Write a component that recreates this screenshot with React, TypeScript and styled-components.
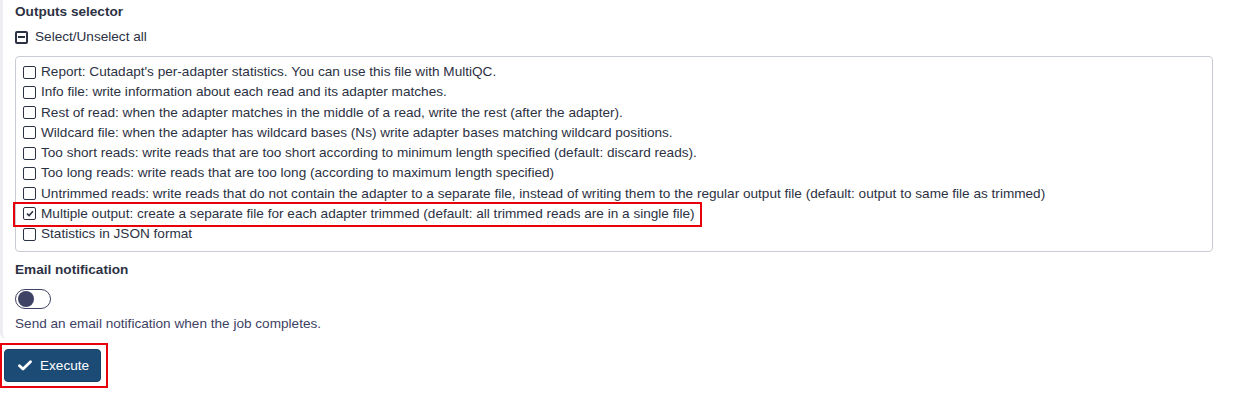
import React from "react";
import styled, { createGlobalStyle } from "styled-components";

const Global = createGlobalStyle`
  html, body { margin: 0; padding: 0; background: #ffffff; }
  body {
    font-family: "Liberation Sans", Arial, sans-serif;
    font-size: 13.6px;
    color: #2c3143;
  }
`;

const Page = styled.div`
  width: 1233px;
  height: 400px;
  overflow: hidden;
  display: flex;
  flex-direction: column;
  align-items: flex-start;
`;

const Panel = styled.div`
  align-self: stretch;
  box-sizing: border-box;
  height: 339px;
  border-left: 3px solid #eceef1;
  border-bottom-left-radius: 6px;
  padding: 2px 20px 0 12px;
  display: flex;
  flex-direction: column;
`;

const Heading = styled.div`
  font-weight: bold;
  line-height: 20px;
  height: 20px;
`;

const SelectAll = styled.div`
  display: flex;
  align-items: center;
  gap: 7px;
  margin-top: 5px;
  height: 20px;
  line-height: 20px;
`;

const MinusBox = styled.span`
  box-sizing: border-box;
  width: 13px;
  height: 13px;
  border: 2px solid #2c3143;
  border-radius: 2px;
  display: flex;
  align-items: center;
  justify-content: center;
  &::before {
    content: "";
    width: 7px;
    height: 2px;
    background: #2c3143;
  }
`;

const OptionBox = styled.div`
  margin-top: 9px;
  box-sizing: border-box;
  height: 196px;
  border: 1px solid #c8ccd3;
  border-radius: 4px;
  padding: 5px 0 0 7px;
  display: flex;
  flex-direction: column;
  align-items: flex-start;
`;

const Row = styled.div<{ $mark?: boolean }>`
  position: relative;
  display: flex;
  align-items: center;
  gap: 5px;
  height: 20.25px;
  line-height: 20px;
  white-space: nowrap;
  ${(p) =>
    p.$mark
      ? `&::after {
          content: "";
          position: absolute;
          left: -10px;
          right: -7px;
          top: -2px;
          bottom: -3px;
          border: 2px solid #e8000b;
        }`
      : ""}
`;

const Check = styled.span`
  box-sizing: border-box;
  width: 13px;
  height: 13px;
  border: 1.5px solid #2c3143;
  border-radius: 2px;
  display: flex;
  align-items: center;
  justify-content: center;
  flex: none;
`;

const SubHeading = styled(Heading)`
  margin-top: 8px;
`;

const Toggle = styled.span`
  box-sizing: border-box;
  margin-top: 9px;
  width: 36px;
  height: 20px;
  border: 1px solid #3e4264;
  border-radius: 10px;
  padding: 1px 2px;
  display: flex;
  align-items: center;
  &::before {
    content: "";
    width: 16px;
    height: 16px;
    border-radius: 50%;
    background: #3e4264;
  }
`;

const Help = styled.div`
  margin-top: 5px;
  line-height: 20px;
  color: #3e4264;
`;

const ExecuteWrap = styled.div`
  position: relative;
  margin: 10px 0 0 4px;
  &::after {
    content: "";
    position: absolute;
    left: -4px;
    right: -7px;
    top: -6px;
    bottom: -6px;
    border: 2px solid #e8000b;
  }
`;

const Button = styled.button`
  box-sizing: border-box;
  width: 97px;
  height: 33px;
  background: #1c4b75;
  border: 1px solid #174068;
  border-radius: 4px;
  color: #ffffff;
  font-family: "Liberation Sans", Arial, sans-serif;
  font-size: 13.6px;
  display: flex;
  align-items: center;
  gap: 8px;
  padding: 0 0 0 13px;
  cursor: pointer;
`;

const options: { text: string; on?: boolean }[] = [
  { text: "Report: Cutadapt's per-adapter statistics. You can use this file with MultiQC." },
  { text: "Info file: write information about each read and its adapter matches." },
  { text: "Rest of read: when the adapter matches in the middle of a read, write the rest (after the adapter)." },
  { text: "Wildcard file: when the adapter has wildcard bases (Ns) write adapter bases matching wildcard positions." },
  { text: "Too short reads: write reads that are too short according to minimum length specified (default: discard reads)." },
  { text: "Too long reads: write reads that are too long (according to maximum length specified)" },
  {
    text: "Untrimmed reads: write reads that do not contain the adapter to a separate file, instead of writing them to the regular output file (default: output to same file as trimmed)",
  },
  {
    text: "Multiple output: create a separate file for each adapter trimmed (default: all trimmed reads are in a single file)",
    on: true,
  },
  { text: "Statistics in JSON format" },
];

export default function App() {
  return (
    <Page>
      <Global />
      <Panel>
        <Heading>Outputs selector</Heading>
        <SelectAll>
          <MinusBox />
          <span>Select/Unselect all</span>
        </SelectAll>
        <OptionBox>
          {options.map((o) => (
            <Row key={o.text} $mark={o.on}>
              <Check>
                {o.on && (
                  <svg width="8" height="7" viewBox="0 0 8 7">
                    <path d="M1 3.6 L3.1 5.6 L7 1.2" fill="none" stroke="#2c3143" strokeWidth="1.5" />
                  </svg>
                )}
              </Check>
              <span>{o.text}</span>
            </Row>
          ))}
        </OptionBox>
        <SubHeading>Email notification</SubHeading>
        <Toggle />
        <Help>Send an email notification when the job completes.</Help>
      </Panel>
      <ExecuteWrap>
        <Button>
          <svg width="14" height="11" viewBox="0 0 14 11">
            <path d="M1.5 5.8 L5 9 L12.5 1.8" fill="none" stroke="#ffffff" strokeWidth="2.8" strokeLinecap="round" strokeLinejoin="round" />
          </svg>
          <span>Execute</span>
        </Button>
      </ExecuteWrap>
    </Page>
  );
}
